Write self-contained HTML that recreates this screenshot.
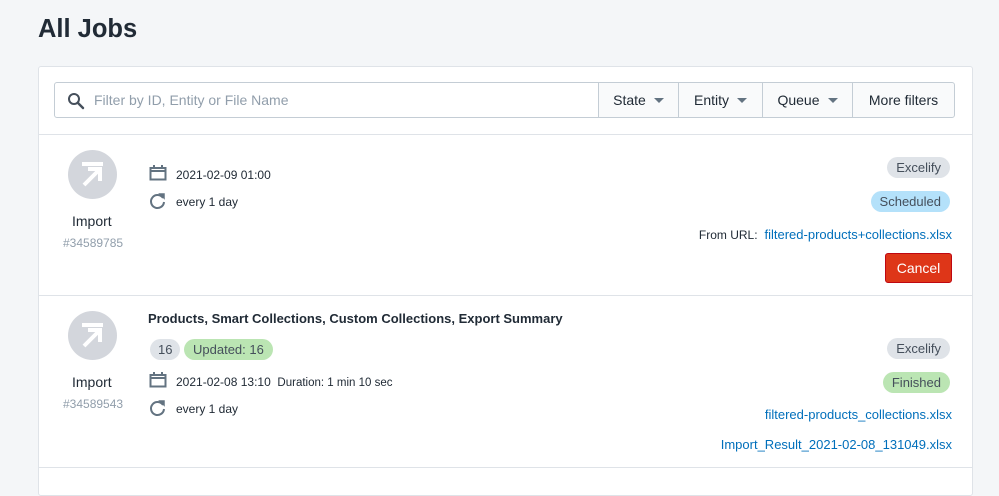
<!DOCTYPE html>
<html><head><meta charset="utf-8"><style>
*{box-sizing:border-box;margin:0;padding:0}
body{width:999px;height:483px;background:#f4f6f8;font-family:"Liberation Sans",sans-serif;color:#212b36;position:relative;overflow:hidden;font-size:13px}
.a{position:absolute;white-space:nowrap}
h1{position:absolute;left:38px;top:15px;font-size:25.5px;font-weight:bold;color:#212b36}
.card{position:absolute;left:38px;top:66px;width:935px;height:430px;background:#fff;border:1px solid #dfe3e8;border-radius:3px}
.hr{position:absolute;left:38px;width:935px;height:1px;background:#dfe3e8}
.search{position:absolute;left:54px;top:82px;width:545px;height:36px;border:1px solid #c4cdd5;border-radius:3px 0 0 3px;background:#fff}
.btn{position:absolute;top:82px;height:36px;border:1px solid #c4cdd5;background:#f9fafb;font-size:14px;color:#212b36;display:flex;align-items:center;justify-content:center;gap:8px}
.tri{width:0;height:0;border-left:5px solid transparent;border-right:5px solid transparent;border-top:5px solid #637381}
.av{position:absolute;left:68px;width:49px;height:49px;border-radius:50%;background:#d3d6dc}
.pill{position:absolute;height:21px;border-radius:11px;font-size:13px;line-height:21px;padding:0 9px;color:#454f5b;white-space:nowrap}
.lnk{color:#006fbb;font-size:13px}
.sm{font-size:12px;color:#212b36}
</style></head><body>
<h1>All Jobs</h1>
<div class="card"></div>
<div class="search">
<svg class="a" style="left:12px;top:9px" width="18" height="18" viewBox="0 0 18 18"><circle cx="7" cy="7" r="5" fill="none" stroke="#454f5b" stroke-width="2"/><path d="M11 11l5 5" stroke="#454f5b" stroke-width="2.4" stroke-linecap="round"/></svg>
<div class="a" style="left:39px;top:9px;font-size:14px;color:#919eab">Filter by ID, Entity or File Name</div>
</div>
<div class="btn" style="left:598px;width:81px">State<span class="tri"></span></div>
<div class="btn" style="left:678px;width:85px">Entity<span class="tri"></span></div>
<div class="btn" style="left:762px;width:91px">Queue<span class="tri"></span></div>
<div class="btn" style="left:852px;width:103px;border-radius:0 3px 3px 0">More filters</div>
<div class="hr" style="top:134px"></div>
<div class="hr" style="top:295px"></div>
<div class="hr" style="top:467px"></div>

<!-- row 1 -->
<div class="av" style="top:150px"><svg width="49" height="49" viewBox="0 0 49 49"><path d="M14 14h21" stroke="#fff" stroke-width="4"/><path d="M16 35L32 19M20 19h12v12" stroke="#fff" stroke-width="4" fill="none"/></svg></div>
<div class="a" style="left:72px;top:213px;font-size:14px">Import</div>
<div class="a" style="left:63px;top:236px;font-size:12px;color:#919eab">#34589785</div>
<svg class="a" style="left:149px;top:165px" width="18" height="16" viewBox="0 0 18 16"><rect x="1.5" y="3" width="15" height="11.5" fill="none" stroke="#637381" stroke-width="2"/><path d="M1.5 6h15M5 0v4M13 0v4" stroke="#637381" stroke-width="2"/></svg>
<div class="a sm" style="left:176px;top:168px">2021-02-09 01:00</div>
<svg class="a" style="left:149px;top:192px" width="18" height="18" viewBox="0 0 18 18"><path d="M14 6A6.5 6.5 0 1 0 15 10" fill="none" stroke="#637381" stroke-width="2"/><path d="M11 2l4 0 0 4z" fill="#637381" stroke="#637381" stroke-width="1.5"/></svg>
<div class="a sm" style="left:176px;top:195px">every 1 day</div>
<div class="pill" style="right:49px;top:157px;background:#dfe3e8">Excelify</div>
<div class="pill" style="right:49px;top:191px;background:#b4e1fa">Scheduled</div>
<div class="a" style="right:47px;top:227px;font-size:12px">From URL: <span class="lnk">&nbsp;filtered-products+collections.xlsx</span></div>
<div class="a" style="left:885px;top:253px;width:67px;height:30px;background:#de3618;border:1px solid #bf0711;border-radius:3px;color:#fff;font-size:14px;text-align:center;line-height:28px">Cancel</div>

<!-- row 2 -->
<div class="av" style="top:311px"><svg width="49" height="49" viewBox="0 0 49 49"><path d="M14 14h21" stroke="#fff" stroke-width="4"/><path d="M16 35L32 19M20 19h12v12" stroke="#fff" stroke-width="4" fill="none"/></svg></div>
<div class="a" style="left:72px;top:374px;font-size:14px">Import</div>
<div class="a" style="left:63px;top:397px;font-size:12px;color:#919eab">#34589543</div>
<div class="a" style="left:148px;top:311px;font-size:13px;font-weight:bold">Products, Smart Collections, Custom Collections, Export Summary</div>
<div class="pill" style="left:150px;top:339px;background:#dfe3e8;padding:0 8px">16</div>
<div class="pill" style="left:184px;top:339px;background:#bbe5b3">Updated: 16</div>
<svg class="a" style="left:149px;top:372px" width="18" height="16" viewBox="0 0 18 16"><rect x="1.5" y="3" width="15" height="11.5" fill="none" stroke="#637381" stroke-width="2"/><path d="M1.5 6h15M5 0v4M13 0v4" stroke="#637381" stroke-width="2"/></svg>
<div class="a sm" style="left:176px;top:375px">2021-02-08 13:10 &nbsp;<span style="font-size:11.5px">Duration: 1 min 10 sec</span></div>
<svg class="a" style="left:149px;top:399px" width="18" height="18" viewBox="0 0 18 18"><path d="M14 6A6.5 6.5 0 1 0 15 10" fill="none" stroke="#637381" stroke-width="2"/><path d="M11 2l4 0 0 4z" fill="#637381" stroke="#637381" stroke-width="1.5"/></svg>
<div class="a sm" style="left:176px;top:402px">every 1 day</div>
<div class="pill" style="right:49px;top:338px;background:#dfe3e8">Excelify</div>
<div class="pill" style="right:49px;top:372px;background:#bbe5b3">Finished</div>
<div class="a lnk" style="right:47px;top:407px">filtered-products_collections.xlsx</div>
<div class="a lnk" style="right:47px;top:437px">Import_Result_2021-02-08_131049.xlsx</div>
</body></html>
